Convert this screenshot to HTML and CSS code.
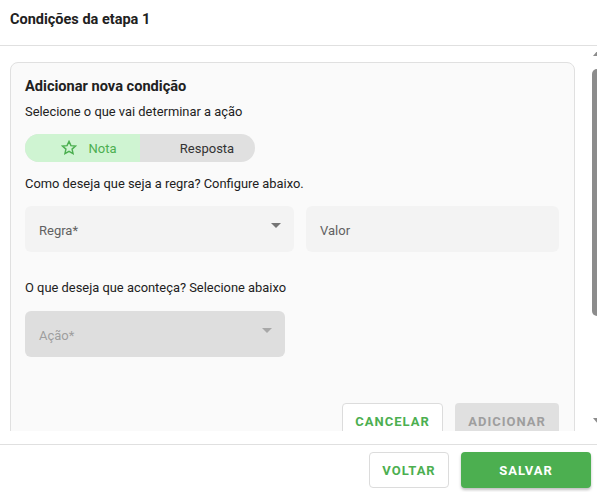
FILE: index.html
```html
<!DOCTYPE html>
<html lang="pt-BR">
<head>
<meta charset="utf-8">
<title>Condições da etapa 1</title>
<link rel="stylesheet" href="styles.css">
</head>
<body>
<div class="dialog">
  <header class="dialog-header">Condições da etapa 1</header>

  <div class="dialog-main">
    <main class="dialog-body">
      <section class="card">
        <h2 class="card-title">Adicionar nova condição</h2>
        <p class="hint hint-first">Selecione o que vai determinar a ação</p>

        <div class="toggle">
          <button class="toggle-opt is-active" type="button">
            <svg class="star" viewBox="0 0 24 24" width="18" height="18" aria-hidden="true">
              <path d="M12 3.2l2.6 5.6 6.1.6-4.6 4.1 1.3 6-5.4-3.1-5.4 3.1 1.3-6-4.6-4.1 6.1-.6z" fill="none" stroke="currentColor" stroke-width="1.9" stroke-linejoin="miter"/>
            </svg>
            Nota
          </button>
          <button class="toggle-opt" type="button">Resposta</button>
        </div>

        <p class="hint hint-rule">Como deseja que seja a regra? Configure abaixo.</p>

        <div class="field-row">
          <div class="field field-select">
            <span class="field-label">Regra*</span>
            <span class="caret"></span>
          </div>
          <div class="field">
            <span class="field-label">Valor</span>
          </div>
        </div>

        <p class="hint hint-action">O que deseja que aconteça? Selecione abaixo</p>

        <div class="field field-select is-disabled">
          <span class="field-label">Ação*</span>
          <span class="caret"></span>
        </div>

        <div class="card-actions">
          <button class="btn btn-outline" type="button">CANCELAR</button>
          <button class="btn btn-disabled" type="button" disabled>ADICIONAR</button>
        </div>
      </section>
    </main>

    <div class="scrollbar" aria-hidden="true">
      <span class="sb-arrow sb-up"></span>
      <span class="sb-thumb"></span>
      <span class="sb-arrow sb-down"></span>
    </div>
  </div>

  <footer class="dialog-footer">
    <button class="btn btn-outline btn-back" type="button">VOLTAR</button>
    <button class="btn btn-primary" type="button">SALVAR</button>
  </footer>
</div>
</body>
</html>
```

FILE: styles.css
```css
* {
  box-sizing: border-box;
}

html,
body {
  margin: 0;
  padding: 0;
  background: #ffffff;
  overflow: hidden;
}

body {
  font-family: Roboto, "Noto Sans", "Liberation Sans", sans-serif;
  color: #212121;
}

button {
  font-family: inherit;
  margin: 0;
}

/* dialog frame */
.dialog {
  width: 605px;
  height: 492px;
  display: flex;
  flex-direction: column;
}

.dialog-header {
  height: 46px;
  padding: 11px 10px 0;
  font-size: 14.5px;
  line-height: 18px;
  font-weight: 700;
  color: #212121;
  border-bottom: 1px solid #e0e0e0;
  flex: none;
}

/* scrolling region + its scrollbar */
.dialog-main {
  height: 385px;
  flex: none;
  display: flex;
}

.dialog-body {
  flex: 1;
  min-width: 0;
  overflow: hidden;
  padding: 16px 15px 0 10px;
}

.scrollbar {
  width: 15px;
  flex: none;
  display: flex;
  flex-direction: column;
  align-items: center;
  padding: 4px 0 7px;
  background: #ffffff;
}

.sb-arrow {
  width: 0;
  height: 0;
  border-left: 5px solid transparent;
  border-right: 5px solid transparent;
}

.sb-up {
  border-bottom: 6px solid #8c8c8c;
}

.sb-down {
  margin-top: auto;
  border-top: 6px solid #8c8c8c;
}

.sb-thumb {
  margin-top: 13px;
  width: 11px;
  height: 247px;
  border-radius: 5px;
  background: #8c8c8c;
}

/* new condition card */
.card {
  border: 1px solid #e0e0e0;
  border-radius: 8px;
  background: #fafafa;
  padding: 13px 15px 16px 14px;
}

.card-title {
  margin: 0;
  font-size: 14.6px;
  line-height: 20px;
  font-weight: 700;
  color: #212121;
}

.hint {
  margin: 0;
  font-size: 12.9px;
  line-height: 18px;
  color: #212121;
}

.hint-first {
  margin-top: 7px;
}

.hint-rule {
  margin-top: 13px;
}

.hint-action {
  margin-top: 27px;
}

/* segmented toggle */
.toggle {
  margin-top: 13px;
  width: 230px;
  height: 28px;
  border-radius: 14px;
  overflow: hidden;
  display: flex;
  background: #e0e0e0;
}

.toggle-opt {
  flex: none;
  width: 115px;
  border: 0;
  background: transparent;
  font-size: 13px;
  color: #333333;
  display: flex;
  align-items: center;
  justify-content: center;
  gap: 10px;
  padding: 0 0 0 19px;
}

.toggle-opt.is-active {
  background: #cff4d2;
  color: #4caf50;
  padding-left: 12px;
}

.star {
  display: block;
}

/* fields */
.field-row {
  margin-top: 13px;
  display: grid;
  grid-template-columns: 269px 1fr;
  gap: 12px;
}

.field {
  height: 46px;
  border-radius: 6px;
  background: #f3f3f3;
  padding: 0 13px 0 14px;
  display: flex;
  align-items: center;
  justify-content: space-between;
  font-size: 13px;
}

.field-label {
  color: #616161;
  padding-top: 2px;
}

.caret {
  width: 0;
  height: 0;
  border-left: 5px solid transparent;
  border-right: 5px solid transparent;
  border-top: 5px solid #757575;
  margin-top: -8px;
}

.field.is-disabled {
  margin-top: 14px;
  width: 260px;
  background: #dedede;
}

.field.is-disabled .field-label {
  color: #9e9e9e;
}

.field.is-disabled .caret {
  border-top-color: #a8a8a8;
}

/* buttons */
.btn {
  height: 36px;
  border-radius: 4px;
  font-size: 13px;
  font-weight: 700;
  letter-spacing: 1px;
  padding: 0 14px;
  display: inline-flex;
  align-items: center;
  justify-content: center;
}

.btn-outline {
  background: #ffffff;
  border: 1px solid #dcdcdc;
  color: #4caf50;
}

.btn-disabled {
  background: #e0e0e0;
  border: 0;
  color: #9e9e9e;
}

.btn-primary {
  background: #4caf50;
  border: 0;
  color: #ffffff;
  box-shadow: 0 2px 3px rgba(0, 0, 0, 0.25);
}

.card-actions {
  margin-top: 46px;
  display: flex;
  justify-content: flex-end;
  gap: 12px;
}

.card-actions .btn-outline {
  width: 101px;
}

.card-actions .btn-disabled {
  width: 104px;
}

/* footer */
.dialog-footer {
  margin-top: 13px;
  border-top: 1px solid #e0e0e0;
  padding: 7px 14px 0 0;
  display: flex;
  justify-content: flex-end;
  gap: 12px;
}

.btn-back {
  width: 80px;
}

.btn-primary {
  width: 130px;
}
```
